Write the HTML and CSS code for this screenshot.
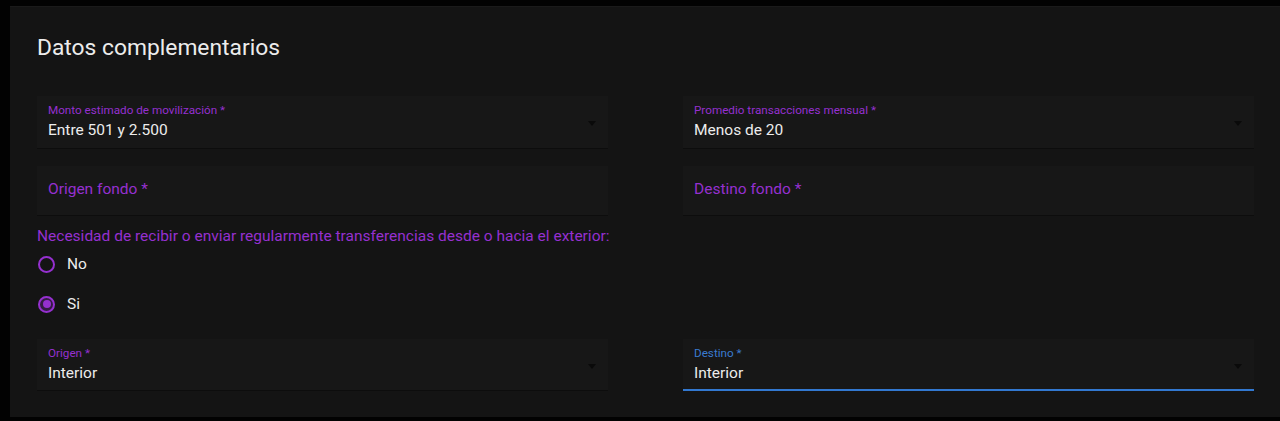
FILE: index.html
```html
<!DOCTYPE html>
<html lang="es">
<head>
<meta charset="utf-8">
<title>Datos complementarios</title>
<link rel="stylesheet" href="styles.css">
</head>
<body>
<div class="card">
  <h2 class="title">Datos complementarios</h2>
  <div class="grid">
    <div class="field filled">
      <span class="label">Monto estimado de movilización *</span>
      <span class="value">Entre 501 y 2.500</span>
      <span class="arrow"></span>
    </div>
    <div class="field filled">
      <span class="label">Promedio transacciones mensual *</span>
      <span class="value">Menos de 20</span>
      <span class="arrow"></span>
    </div>
    <div class="field empty">
      <span class="placeholder">Origen fondo *</span>
    </div>
    <div class="field empty">
      <span class="placeholder">Destino fondo *</span>
    </div>
  </div>
  <div class="radio-group">
    <div class="radio-label">Necesidad de recibir o enviar regularmente transferencias desde o hacia el exterior:</div>
    <label class="radio"><span class="circle"></span><span class="rtext">No</span></label>
    <label class="radio"><span class="circle checked"></span><span class="rtext">Si</span></label>
  </div>
  <div class="grid bottom">
    <div class="field filled">
      <span class="label">Origen *</span>
      <span class="value">Interior</span>
      <span class="arrow"></span>
    </div>
    <div class="field filled focused">
      <span class="label">Destino *</span>
      <span class="value">Interior</span>
      <span class="arrow"></span>
    </div>
  </div>
</div>
</body>
</html>
```

FILE: styles.css
```css
html, body {
  margin: 0;
  padding: 0;
  background: #020202;
  height: 100%;
  overflow: hidden;
}
body {
  font-family: Roboto, "Liberation Sans", Arial, sans-serif;
  padding: 6px 0 0 10px;
  box-sizing: border-box;
}
.card {
  background: #141414;
  height: 411px;
  box-sizing: border-box;
  padding: 27px 26px 0 27px;
  border-top: 1px solid #1a1a1a;
}
.title {
  margin: 0;
  font-size: 22.8px;
  font-weight: 400;
  color: #ececec;
  line-height: 28px;
}
.grid {
  display: grid;
  grid-template-columns: 1fr 1fr;
  column-gap: 75px;
  row-gap: 17px;
  margin-top: 34px;
}
.field {
  position: relative;
  background: #171717;
  border-bottom: 1px solid #0d0d0d;
  height: 53px;
  box-sizing: border-box;
  padding: 0 11px;
  display: flex;
  flex-direction: column;
}
.field.empty {
  height: 50px;
  justify-content: center;
}
.label {
  font-size: 11.7px;
  color: #9530cf;
  margin-top: 7px;
  line-height: 14px;
}
.value {
  font-size: 15.5px;
  color: #ececec;
  line-height: 20px;
  margin-top: 3px;
}
.placeholder {
  font-size: 15.5px;
  color: #9530cf;
  line-height: 20px;
  margin-top: -4px;
}
.arrow {
  position: absolute;
  right: 12px;
  top: 25px;
  width: 0;
  height: 0;
  border-left: 4px solid transparent;
  border-right: 4px solid transparent;
  border-top: 5px solid #0a0a0a;
}
.field.focused {
  border-bottom: 2px solid #3278d0;
}
.field.focused .label {
  color: #3a7bd0;
}
.radio-group {
  margin-top: 11px;
}
.radio-label {
  font-size: 15.5px;
  color: #9530cf;
  line-height: 18px;
}
.radio {
  display: flex;
  align-items: center;
  height: 20px;
  margin-top: 9px;
}
.radio + .radio {
  margin-top: 20px;
}
.circle {
  width: 13px;
  height: 13px;
  border: 2px solid #9530cf;
  border-radius: 50%;
  box-sizing: content-box;
  position: relative;
  margin-left: 1px;
}
.circle.checked::after {
  content: "";
  position: absolute;
  left: 2.5px;
  top: 2.5px;
  width: 8px;
  height: 8px;
  border-radius: 50%;
  background: #9530cf;
}
.circle.checked {
  background: rgba(149, 48, 207, 0.25);
}
.rtext {
  margin-left: 12px;
  font-size: 15.5px;
  color: #ececec;
}
.grid.bottom {
  margin-top: 25px;
}
.grid.bottom .field {
  height: 52px;
}
```
